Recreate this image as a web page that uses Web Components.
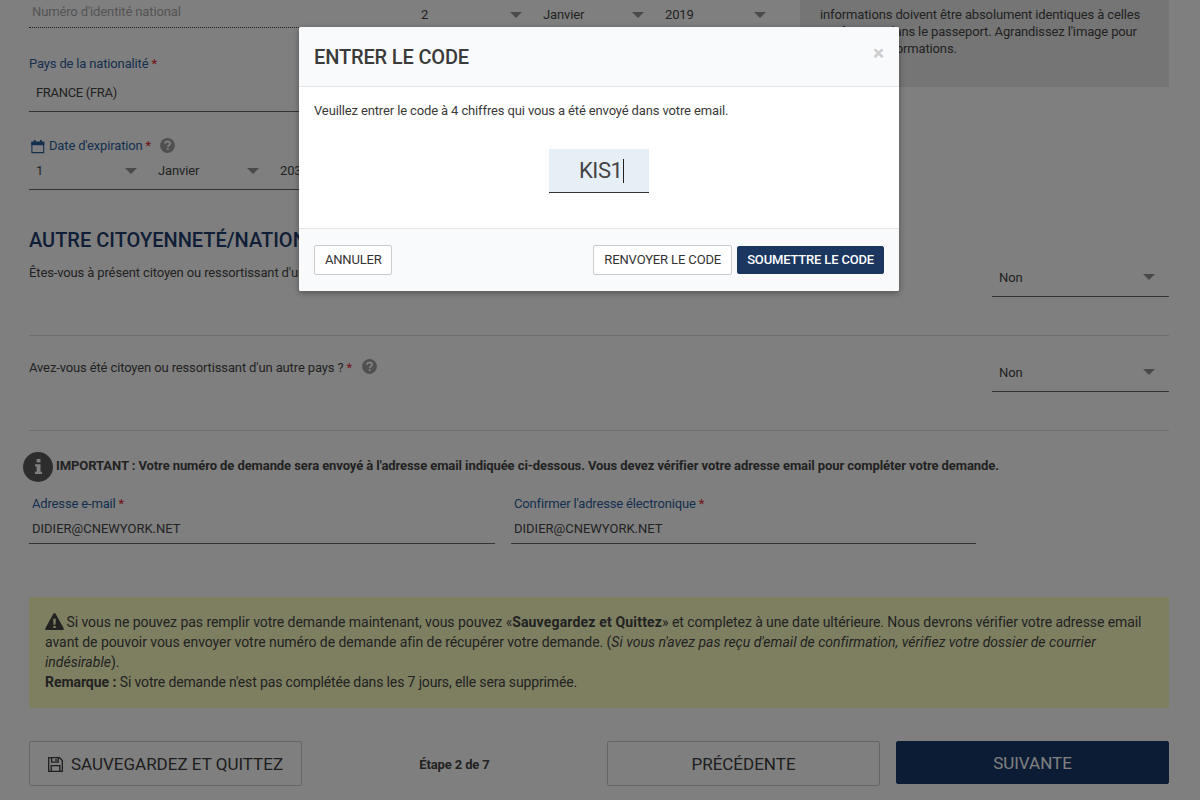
<!DOCTYPE html>
<html lang="fr">
<head>
<meta charset="utf-8">
<title>Entrer le code</title>
<style>
    html, body { margin: 0; background: #fff; }
    body { font-family: Roboto, "Liberation Sans", sans-serif; font-size: 13px; letter-spacing: -.13px; color: #454545; overflow: hidden; }
    b { font-weight: 700; }
</style>
</head>
<body>
<app-page>
    <div class="top">
        <div>
            <plain-input placeholder dotted>Numéro d'identité national</plain-input>
            <field-label style="margin-top:26px;padding-left:0">Pays de la nationalité</field-label>
            <value-line>FRANCE (FRA)</value-line>
            <field-label style="margin-top:24px" flush>
                <svg slot="before" width="15" height="15" viewBox="0 0 15 15" fill="none" stroke="#2a5f9e" stroke-width="1.100"><path d="M.9 3.600h11.800v10H.9z"/><path d="M.9 3h11.800v2.600H.9z" fill="#2a5f9e"/><path d="M3.700 1v3M9.900 1v3" stroke-width="1.800"/></svg>
                Date d'expiration
                <help-icon slot="after"></help-icon>
            </field-label>
            <date-row>
                <select-cell>1</select-cell>
                <select-cell>Janvier</select-cell>
                <select-cell>2030</select-cell>
            </date-row>
        </div>
        <date-row class="first">
            <select-cell>2</select-cell>
            <select-cell>Janvier</select-cell>
            <select-cell>2019</select-cell>
        </date-row>
        <info-box>informations doivent être absolument identiques à celles qui figurent dans le passeport. Agrandissez l'image pour vérifier les informations.</info-box>
    </div>

    <section-title>AUTRE CITOYENNETÉ/NATIONALITÉ</section-title>

    <question-row style="margin-top:11px" nudge>
        Êtes-vous à présent citoyen ou ressortissant d'un autre pays ?
        <select-cell slot="answer" line>Non</select-cell>
    </question-row>
    <row-rule></row-rule>
    <question-row style="margin-top:22px" nudge>
        Avez-vous été citoyen ou ressortissant d'un autre pays ? <red-star></red-star>
        <help-icon style="margin-left:7px;vertical-align:-2px"></help-icon>
        <select-cell slot="answer" line>Non</select-cell>
    </question-row>
    <row-rule></row-rule>

    <important-note>IMPORTANT : Votre numéro de demande sera envoyé à l'adresse email indiquée ci-dessous. Vous devez vérifier votre adresse email pour compléter votre demande.</important-note>

    <div class="mails">
        <div>
            <field-label>Adresse e-mail</field-label>
            <plain-input>DIDIER@CNEWYORK.NET</plain-input>
        </div>
        <div>
            <field-label>Confirmer l'adresse électronique</field-label>
            <plain-input>DIDIER@CNEWYORK.NET</plain-input>
        </div>
    </div>

    <warning-box>
        Si vous ne pouvez pas remplir votre demande maintenant, vous pouvez «<b style="letter-spacing:.17px">Sauvegardez et Quittez</b>» <span style="letter-spacing:-.08px">et completez à une date ultérieure. Nous devrons vérifier votre adresse email</span> avant de pouvoir vous envoyer votre numéro de demande afin de récupérer votre demande. (<i style="letter-spacing:.01px">Si vous n'avez pas reçu d'email de confirmation, vérifiez votre dossier de courrier indésirable</i>).<br>
        <b>Remarque :</b> <span style="letter-spacing:-.14px">Si votre demande n'est pas complétée dans les 7 jours, elle sera supprimée.</span>
    </warning-box>

    <step-bar>
        <big-button>
            <svg slot="icon" width="15" height="15" viewBox="0 0 15 15" fill="none" stroke="#3c3c3c" stroke-width="1.300"><path d="M.7.7h10.800l2.800 2.800v10.800H.7z"/><path d="M3.600.9v4.300h6.600V.9M3.200 14.100V8.600h8.600v5.500"/><path d="M8 2v2" stroke-width="1.500"/></svg>
            SAUVEGARDEZ ET QUITTEZ
        </big-button>
        <step-label>Étape 2 de 7</step-label>
        <big-button>PRÉCÉDENTE</big-button>
        <big-button primary>SUIVANTE</big-button>
    </step-bar>

    <code-modal slot="overlay">
        <span slot="title">ENTRER LE CODE</span>
        Veuillez entrer le code à 4 chiffres qui vous a été envoyé dans votre email.
        <code-input slot="code">KIS1</code-input>
        <small-button slot="left" style="letter-spacing:-.2px">ANNULER</small-button>
        <small-button slot="right">RENVOYER LE CODE</small-button>
        <small-button slot="right" primary>SOUMETTRE LE CODE</small-button>
    </code-modal>
</app-page>

<script>
    function define(name, css, html = '<slot></slot>') {
        const template = document.createElement('template');
        template.innerHTML = `<style>${css}</style>${html}`;

        customElements.define(name, class extends HTMLElement {
            constructor() {
                super();
                this.attachShadow({ mode: 'open' });
                this.shadowRoot.append(template.content.cloneNode(true));
            }
        });
    }

    define('app-page', `
        :host { display: block; position: relative; width: 1200px; height: 800px; box-sizing: border-box; padding: 0 31px 0 29px; overflow: hidden; }
        .backdrop { position: absolute; inset: 0; background: rgba(0, 0, 0, .5); }
        ::slotted(.top) { display: grid; grid-template-columns: 385px 386px 369px; height: 190px; }
        ::slotted(.mails) { display: grid; grid-template-columns: 466px 465px; column-gap: 16px; margin-top: 13px; }
    `, `
        <slot></slot>
        <div class="backdrop"><slot name="overlay"></slot></div>
    `);

    define('plain-input', `
        :host { display: block; box-sizing: border-box; height: 32px; line-height: 33px; padding-left: 3px; border-bottom: 1px solid #666; color: #454545; letter-spacing: 0; }
        :host([placeholder]) { width: 366px; height: 28px; line-height: 23px; color: #a8a8a8; letter-spacing: -.13px; }
        :host([dotted]) { border-bottom: 1px dotted #444; }
    `);

    define('value-line', `
        :host { display: block; box-sizing: border-box; width: 366px; height: 40px; line-height: 41px; padding-left: 7px; border-bottom: 1px solid #666; letter-spacing: -.32px; }
    `);

    define('red-star', `
        :host { color: #e02828; }
    `, '*');

    define('field-label', `
        :host { display: block; height: 18px; line-height: 20px; padding-left: 3px; color: #2a5f9e; letter-spacing: -.16px; }
        :host([flush]) { padding-left: 2px; }
        .row { display: flex; align-items: center; }
        ::slotted(svg) { margin-right: 3px; }
        .star { margin-left: 3px; color: #e02828; }
        ::slotted(help-icon) { margin: -2px 0 0 9px; }
    `, `
        <div class="row"><slot name="before"></slot><span><slot></slot></span><span class="star">*</span><slot name="after"></slot></div>
    `);

    define('help-icon', `
        :host { display: inline-block; width: 15px; height: 15px; vertical-align: -1px; }
        svg { display: block; }
    `, `
        <svg width="15" height="15" viewBox="0 0 15 15">
            <circle cx="7.500" cy="7.500" r="7.400" fill="#a0a0a0"/>
            <path d="M5 5.700c.1-1.500 1.100-2.200 2.600-2.200 1.500 0 2.500.8 2.500 2 0 1.100-.7 1.500-1.300 1.900-.6.4-1 .7-1 1.500" fill="none" stroke="#fff" stroke-width="1.800"/>
            <rect x="6.800" y="10" width="1.900" height="1.900" fill="#fff"/>
        </svg>
    `);

    define('date-row', `
        :host { display: grid; grid-template-columns: repeat(3, 1fr); box-sizing: border-box; width: 366px; height: 36px; border-bottom: 1px solid #666; }
        :host(.first) { height: 34px; margin-top: -2px; }
    `);

    define('select-cell', `
        :host { display: block; position: relative; box-sizing: border-box; line-height: 33px; padding-left: 7px; }
        :host([line]) { width: 177px; height: 34px; line-height: 30px; border-bottom: 1px solid #666; }
        :host::after { content: ""; position: absolute; left: 96px; top: 14px; border: 6px solid transparent; border-top-color: #959595; border-bottom: 0; }
        :host([line])::after { left: 151px; top: 11px; }
    `);

    define('info-box', `
        :host { display: block; box-sizing: border-box; height: 87px; padding: 6px 20px 0; background: #ebebeb; line-height: 17px; }
    `);

    define('section-title', `
        :host { display: block; margin-top: 38px; font-size: 20px; line-height: 24px; font-weight: 500; letter-spacing: 0; color: #1d3d6d; white-space: nowrap; }
    `);

    define('question-row', `
        :host { display: flex; justify-content: space-between; height: 34px; }
        :host([nudge]) .text { padding-top: 1px; }
        .text { line-height: 18px; }
    `, `
        <div class="text"><slot></slot></div>
        <slot name="answer"></slot>
    `);

    define('row-rule', `
        :host { display: block; height: 1px; margin-top: 38px; background: #ddd; width: 1140px; }
    `, '');

    define('important-note', `
        :host { display: flex; align-items: center; gap: 3px; height: 29px; margin: 21px 0 0 -6px; font-weight: 700; font-size: 13px; letter-spacing: -.085px; white-space: nowrap; }
        .dot { flex: none; display: flex; width: 30px; height: 30px; border-radius: 50%; background: #5a5a5a; align-items: center; justify-content: center; }
        .text { padding-bottom: 2px; }
    `, `
        <span class="dot">
            <svg width="9" height="15" viewBox="0 0 9 15" fill="#fff"><rect x="2.600" y="0" width="3.900" height="3.400"/><path d="M1 5.300h5.500v7.500H8V15H1v-2.200h1.600V7.500H1z"/></svg>
        </span>
        <span class="text"><slot></slot></span>
    `);

    define('warning-box', `
        :host { display: block; box-sizing: border-box; height: 111px; margin-top: 53px; padding: 15px 16px 0; background: #fcfec2; font-size: 14px; line-height: 20px; letter-spacing: -.055px; }
        svg { vertical-align: -3px; margin-right: -1px; }
    `, `
        <svg width="19" height="17" viewBox="0 0 20 18"><path fill-rule="evenodd" fill="#444" d="M10 0c.5 0 .9.3 1.200.8l8.500 15.400c.5 1-.2 1.800-1.200 1.800H1.500C.5 18-.2 17.200.3 16.200L8.800.8C9.100.3 9.500 0 10 0zM8.600 6l.3 6.500h2.200L11.400 6zM8.700 13.700v2.300h2.600v-2.300z"/></svg><slot></slot>
    `);

    define('step-bar', `
        :host { display: grid; grid-template-columns: 273px 305px 273px 289px; margin-top: 33px; align-items: start; }
        ::slotted(big-button[primary]) { margin-left: 16px; }
    `);

    define('step-label', `
        :host { display: flex; height: 45px; align-items: center; justify-content: center; font-weight: 700; font-size: 13px; padding-top: 1px; box-sizing: border-box; }
    `);

    define('big-button', `
        :host { display: flex; box-sizing: border-box; height: 45px; padding-top: 1px; align-items: center; justify-content: center; gap: 8px; border: 1px solid #ccc; border-radius: 2px; font-size: 17px; color: #3c3c3c; letter-spacing: 0; }
        :host([primary]) { height: 43px; background: #19386a; border-color: #19386a; color: #fff; }
    `, `
        <slot name="icon"></slot><span><slot></slot></span>
    `);

    define('code-modal', `
        :host { display: block; box-sizing: border-box; width: 600px; height: 264px; margin: 27px 0 0 299px; background: #fff; border-radius: 2px; box-shadow: 0 2px 6px rgba(0, 0, 0, .35); color: #3a3a3a; }
        header { display: flex; justify-content: space-between; box-sizing: border-box; height: 60px; padding: 0 15px; background: #f9fafc; border-bottom: 1px solid #e5e5e5; border-radius: 2px 2px 0 0; }
        h4 { margin: 0; font-size: 20px; line-height: 60px; font-weight: 500; letter-spacing: -.15px; color: #3a3a3a; }
        .close { font-size: 21px; line-height: 52px; font-weight: 700; color: #ccc; }
        main { box-sizing: border-box; height: 141px; padding: 15px 15px 0; line-height: 18px; }
        .code { display: flex; justify-content: center; margin-top: 29px; }
        footer { display: flex; justify-content: space-between; align-items: center; box-sizing: border-box; height: 63px; padding: 0 15px; background: #f9fafc; border-top: 1px solid #e5e5e5; border-radius: 0 0 2px 2px; }
        .right { display: flex; gap: 5px; align-items: center; }
    `, `
        <header><h4><slot name="title"></slot></h4><span class="close">×</span></header>
        <main>
            <slot></slot>
            <div class="code"><slot name="code"></slot></div>
        </main>
        <footer>
            <slot name="left"></slot>
            <div class="right"><slot name="right"></slot></div>
        </footer>
    `);

    define('code-input', `
        :host { display: block; box-sizing: border-box; width: 100px; height: 44px; padding-left: 30px; background: #e6eef6; border-bottom: 1px solid #333; font-size: 22px; letter-spacing: -.45px; line-height: 43px; color: #444; }
        i { display: inline-block; width: 1px; height: 24px; margin-left: 1px; background: #222; vertical-align: -5px; }
    `, `
        <slot></slot><i></i>
    `);

    define('small-button', `
        :host { display: block; box-sizing: border-box; height: 30px; padding: 0 10px; line-height: 28px; background: #fff; border: 1px solid #ccc; border-radius: 2px; font-size: 13px; letter-spacing: -.13px; color: #333; white-space: nowrap; }
        :host([primary]) { height: 28px; line-height: 26px; padding: 0 9px; background: #1b365f; border-color: #1b365f; color: #fff; font-weight: 500; letter-spacing: -.17px; }
    `);
</script>
</body>
</html>
